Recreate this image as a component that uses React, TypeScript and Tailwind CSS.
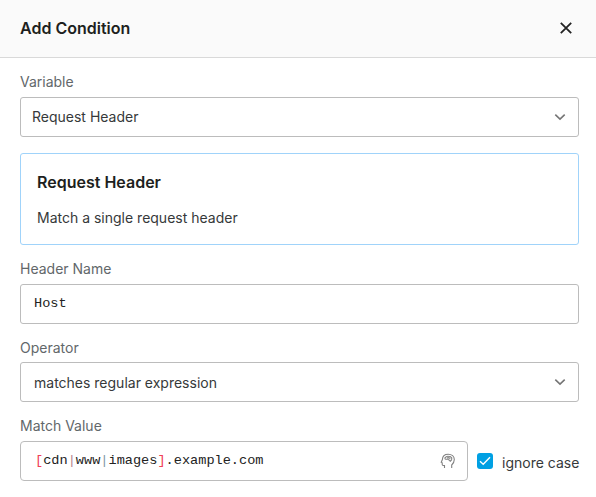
import type { ReactNode } from 'react';

function Chevron() {
  return (
    <svg width="12" height="8" viewBox="0 0 12 8" fill="none" stroke="#757575" strokeWidth="1.6" className="shrink-0">
      <path d="M1.3 1.7 L6 6.2 L10.7 1.7" />
    </svg>
  );
}

function HeadIcon() {
  return (
    <svg width="16" height="16" viewBox="0 0 16 16" fill="none" stroke="#808080" strokeWidth="1.1" className="shrink-0">
      <path d="M4.5 15V12.5H3.2C2.4 12.5 2.2 12 2.2 11.3V9.8L1.2 9.2L2.4 6.6C2.5 3.2 4.8 1.2 8.2 1.2C11.8 1.2 14.3 3.4 14.3 6.6C14.3 9 13.2 10.6 11.7 12V15" />
      <path d="M5 6.2V4.7L6.5 3.6L8 4.2M8 2.8V6.5M8 4.5L10 3.3L11.7 4.7V6.5M5.2 6.2H8L10.3 8.3L11.8 6.7M9.8 4.5V6.2" />
    </svg>
  );
}

function Field({ label, className, children }: { label: string; className: string; children: ReactNode }) {
  return (
    <div className={className}>
      <div className="h-[18px] text-[14px] leading-[18px] text-[#62676a]">{label}</div>
      {children}
    </div>
  );
}

export default function App() {
  return (
    <div className="h-[497px] w-[596px] overflow-hidden bg-white font-['Inter',sans-serif] text-[#36393a]">
      <header className="flex h-[58px] items-center justify-between border-b border-[#d9d9d9] bg-[#fafafa] pr-6 pl-5">
        <h1 className="pb-0.5 text-[16px] leading-5 font-semibold text-[#1d1f20]">Add Condition</h1>
        <svg width="12" height="12" viewBox="0 0 12 12" fill="none" stroke="#222" strokeWidth="1.8" className="mb-0.5">
          <path d="M0.8 0.8 L11.2 11.2 M11.2 0.8 L0.8 11.2" />
        </svg>
      </header>
      <main className="pr-[17px] pl-5">
        <Field label="Variable" className="pt-[15px]">
          <div className="mt-1.5 flex h-10 items-center justify-between rounded-[3px] border border-[#bcbcbc] pr-3 pl-[11px] text-[14px]">
            <span className="pb-0.5">Request Header</span>
            <Chevron />
          </div>
        </Field>
        <section className="mt-4 h-[92px] rounded-[3px] border border-[#a0d3fa] px-4 pt-[18px]">
          <h2 className="text-[16px] leading-5 font-semibold text-[#1d1f20]">Request Header</h2>
          <p className="mt-4 text-[14px] leading-5">Match a single request header</p>
        </section>
        <Field label="Header Name" className="pt-[15px]">
          <div className="mt-1.5 flex h-10 items-center rounded-[3px] border border-[#bcbcbc] pl-[13px] font-['Liberation_Mono',monospace] text-[13.6px] text-[#222]">
            Host
          </div>
        </Field>
        <Field label="Operator" className="pt-[15px]">
          <div className="mt-[5px] flex h-10 items-center justify-between rounded-[3px] border border-[#bcbcbc] pr-3 pl-[13px] text-[14px]">
            <span>matches regular expression</span>
            <Chevron />
          </div>
        </Field>
        <Field label="Match Value" className="pt-[15px]">
          <div className="mt-1.5 flex h-10 items-center">
            <div className="flex h-10 w-[448px] shrink-0 items-center justify-between rounded-[4px] border border-[#bcbcbc] pr-[11px] pl-[14px] font-['Liberation_Mono',monospace] text-[13.6px] text-[#222]">
              <span>
                <span className="text-[#ef4056]">[</span>cdn<span className="text-[#b5838d]">|</span>www
                <span className="text-[#8298a8]">|</span>images<span className="text-[#ef4056]">]</span>.example.com
              </span>
              <HeadIcon />
            </div>
            <div className="ml-[9px] flex h-4 w-4 shrink-0 items-center justify-center rounded-[3px] bg-[#00a0e3]">
              <svg width="12" height="10" viewBox="0 0 12 10" fill="none" stroke="white" strokeWidth="1.4">
                <path d="M1 5.3 L4.2 8.3 L11 1.3" />
              </svg>
            </div>
            <span className="ml-[9px] pt-0.5 text-[14px] whitespace-nowrap">ignore case</span>
          </div>
        </Field>
      </main>
    </div>
  );
}
